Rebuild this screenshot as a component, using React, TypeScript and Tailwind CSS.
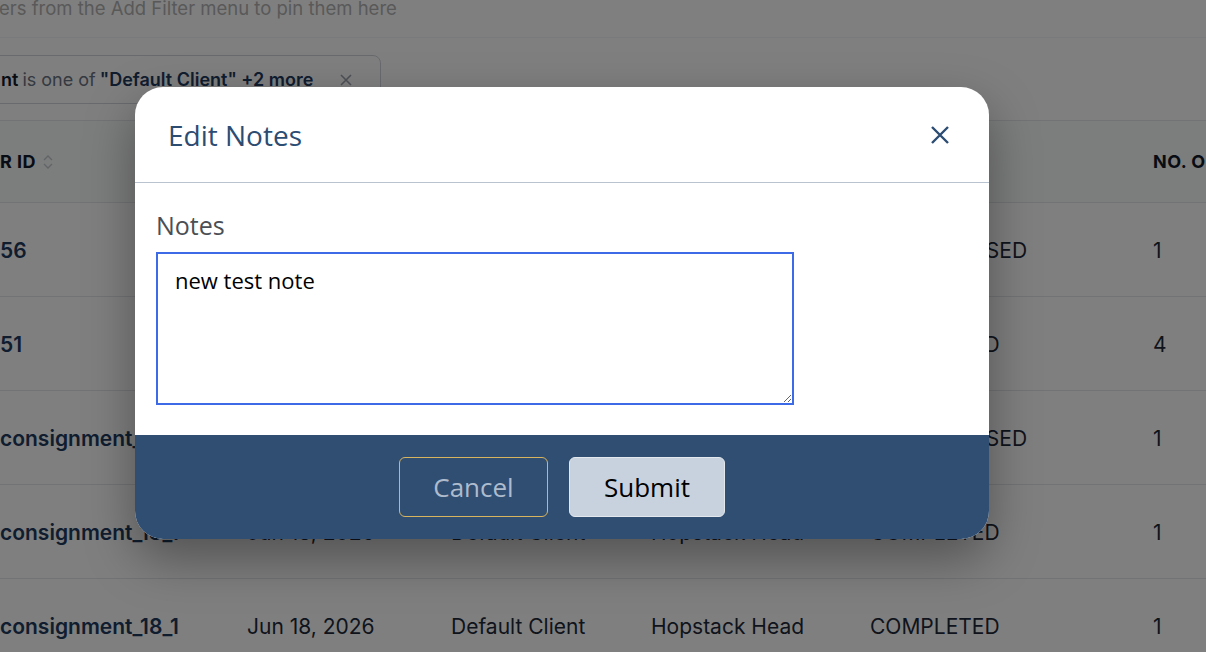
import React from "react";

const rows = [
  { id: "56", date: "Jun 18, 2026", client: "Default Client", warehouse: "Hopstack Head", status: "UNPROCESSED", count: "1" },
  { id: "51", date: "Jun 18, 2026", client: "Default Client", warehouse: "Hopstack Head", status: "COMPLETED", count: "4" },
  { id: "consignment_18_2", date: "Jun 18, 2026", client: "Default Client", warehouse: "Hopstack Head", status: "UNPROCESSED", count: "1" },
  { id: "consignment_18_1", date: "Jun 18, 2026", client: "Default Client", warehouse: "Hopstack Head", status: "COMPLETED", count: "1" },
  { id: "consignment_18_1", date: "Jun 18, 2026", client: "Default Client", warehouse: "Hopstack Head", status: "COMPLETED", count: "1" },
];

const cols = "grid grid-cols-[247px_204px_200px_219px_283px_1fr] items-center";

const SortIcon = () => (
  <svg width="12" height="18" viewBox="0 0 12 18" fill="none" stroke="#c4c8ce" strokeWidth="1.3" className="ml-1.5">
    <path d="M2 7l4-4 4 4" />
    <path d="M2 11l4 4 4-4" />
  </svg>
);

const OrdersBackground = () => (
  <div className="w-full font-['Inter',sans-serif]">
    {/* pinned filter hint */}
    <div className="h-[38px] border-b border-gray-100 text-[18.5px] leading-[17px] text-[#b3b3b3]">
      <span className="-ml-[1px]">ers from the Add Filter menu to pin them here</span>
    </div>

    {/* active filter chip */}
    <div className="h-[83px] border-b border-gray-200 pt-[17px]">
      <div className="-ml-4 flex h-[49px] w-[397px] items-center rounded-r-lg border border-gray-300 pl-4 text-[18px]">
        <span className="font-semibold text-gray-900">nt</span>
        <span className="ml-1 text-gray-500">is one of</span>
        <span className="ml-1 font-semibold text-[#1f3a5f]">"Default Client" +2 more</span>
        <svg width="14" height="14" viewBox="0 0 14 14" stroke="#9ca3af" strokeWidth="1.6" className="ml-[26px]">
          <path d="M2 2l10 10M12 2L2 12" />
        </svg>
      </div>
    </div>

    {/* header */}
    <div className={`${cols} h-[82px] border-b border-gray-200 bg-gray-50 text-[18px] font-bold tracking-wide text-gray-900`}>
      <div className="flex items-center">
        R ID
        <SortIcon />
      </div>
      <div />
      <div />
      <div />
      <div />
      <div className="whitespace-nowrap">NO. OF ITEMS</div>
    </div>

    {rows.map((r, i) => (
      <div key={i} className={`${cols} h-[94px] border-b border-gray-200 pt-[3px] text-[21px] text-gray-800`}>
        <div className="whitespace-nowrap font-semibold text-[#1e3a5f]">{r.id}</div>
        <div>{r.date}</div>
        <div>{r.client}</div>
        <div>{r.warehouse}</div>
        <div>{r.status}</div>
        <div>{r.count}</div>
      </div>
    ))}
  </div>
);

const EditNotesModal = () => (
  <div className="w-[854px] overflow-hidden rounded-[28px] bg-white shadow-[0_20px_50px_rgba(0,0,0,0.35)] font-['Open_Sans',sans-serif]">
    <div className="flex h-[96px] items-center justify-between border-b border-[#b9c3cf] pl-[33px] pr-[38px]">
      <h2 className="text-[28px] font-medium text-[#2c4c72]">Edit Notes</h2>
      <button className="text-[#2c4c72]">
        <svg width="22" height="22" viewBox="0 0 22 22" fill="none" stroke="currentColor" strokeWidth="2.4">
          <path d="M3 3l16 16M19 3L3 19" />
        </svg>
      </button>
    </div>

    <div className="px-[21px] pt-[28px] pb-[30px]">
      <label className="block text-[25px] leading-[28px] text-[#4a4f55]">Notes</label>
      <textarea
        defaultValue="new test note"
        className="mt-[13px] block h-[153px] w-[638px] border-2 border-[#3d6ae6] px-[17px] py-[12px] text-[22px] leading-7 text-black outline-none"
      />
    </div>

    <div className="flex h-[104px] items-center justify-center gap-[21px] bg-[#2f4e72]">
      <button className="h-[60px] w-[149px] rounded-md border border-[#d9b45e] text-[26px] text-[#aebbcd]">
        Cancel
      </button>
      <button className="h-[60px] w-[156px] rounded-md border border-[#e3e8ee] bg-[#c7d2de] text-[26px] font-medium text-black">
        Submit
      </button>
    </div>
  </div>
);

export default function App() {
  return (
    <div className="relative h-[652px] w-[1206px] overflow-hidden bg-white">
      <OrdersBackground />
      <div className="absolute inset-0 bg-black/50 pl-[135px] pt-[87px]">
        <EditNotesModal />
      </div>
    </div>
  );
}
